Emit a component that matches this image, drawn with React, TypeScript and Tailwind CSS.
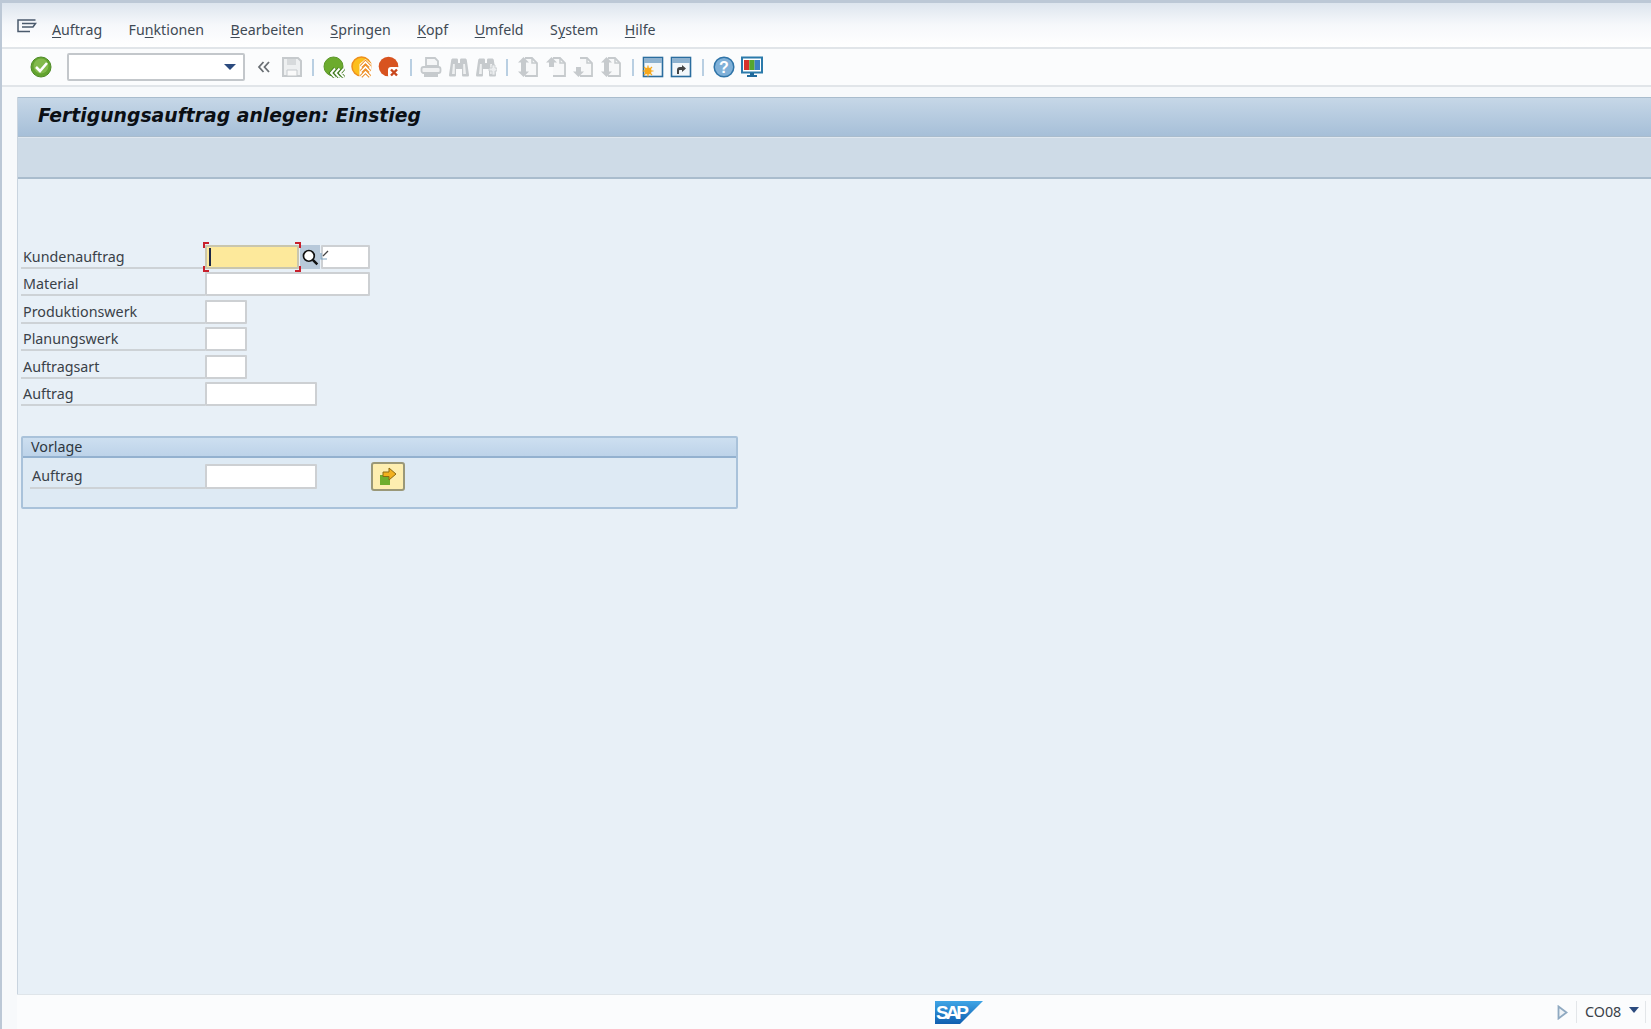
const sans = "font-['Noto_Sans','Open_Sans',sans-serif]";

function Mn({ pre = "", u, post }: { pre?: string; u: string; post: string }) {
  return (
    <span className="text-[14.2px] leading-[20px] text-[#3f4a55]">
      {pre}
      <span className="underline underline-offset-2">{u}</span>
      {post}
    </span>
  );
}

function Sep({ ml }: { ml: string }) {
  return <div className={`h-[17px] w-[2px] bg-[#b9cfe2] ${ml}`} />;
}

const G = "#c6cacd";

function Ic({ children, className = "" }: { children: React.ReactNode; className?: string }) {
  return (
    <svg viewBox="0 0 22 22" className={`h-[22px] w-[22px] shrink-0 ${className}`}>
      {children}
    </svg>
  );
}

function Page({ kind, ml = "ml-[5.700px]" }: { kind: "both" | "up" | "down"; ml?: string }) {
  return (
    <Ic className={ml}>
      <path d="M8 2h7l5 5v13H8" fill="#f7f8f9" stroke={G} strokeWidth="1.800" />
      <path d="M15 2v5h5" fill="none" stroke={G} strokeWidth="1.500" />
      {kind !== "down" && <path d="M6.500 1l5.500 5.500H9V11H4V6.500H1z" fill={G} />}
      {kind !== "up" && <path d="M6.500 21l5.500-5.500H9V11H4v4.500H1z" fill={G} />}
    </Ic>
  );
}

function WindowIc({ children, ml }: { children: React.ReactNode; ml: string }) {
  return (
    <Ic className={ml}>
      <rect x="1.500" y="1.500" width="19" height="19" fill="#f3f7fa" stroke="#2b6d9f" strokeWidth="1.600" />
      <rect x="2" y="2" width="18" height="5" fill="#8fb2cf" />
      {children}
    </Ic>
  );
}

function Binoc({ plus, ml }: { plus?: boolean; ml: string }) {
  return (
    <Ic className={ml}>
      <path d="M5 2.500h3.500c1 0 1.500.5 1.500 1.500v3h2V4c0-1 .5-1.500 1.500-1.500H17c1 0 1.500.5 1.800 1.500L21 19c0 1-.5 1.500-1.500 1.500h-4c-1 0-1.500-.5-1.500-1.500v-6H8v6c0 1-.5 1.500-1.500 1.500h-4C1.500 20.500 1 20 1 19L3.200 4C3.500 3 4 2.500 5 2.500z" fill={G} />
      <path d="M5 8h1.800v10H4zM15.200 8H17l1 10h-2.800z" fill="#eff1f2" />
      {plus && <path d="M14 12h3V9h3v3h2v3h-2v4h-3v-4h-3z" fill="#eceef0" stroke={G} strokeWidth="0.800" />}
    </Ic>
  );
}

const BACK = "M12 12.500L8 17l4 4.500M16.500 12.500L12.500 17l4 4.500M21 12.500L17 17l4 4.500";
const EXIT = "M10 10.500l4.500-4.500 4.500 4.500M10 15.500l4.500-4.500 4.500 4.500M10 20.500l4.500-4.500 4.500 4.500";

function Toolbar() {
  return (
    <div className="flex h-[38px] items-center border-b-2 border-[#e1e5e9] bg-[#fbfcfd]">
      <Ic className="ml-[28px]">
        <circle cx="11" cy="11" r="10" fill="#63a32f" stroke="#4e8b27" />
        <circle cx="11" cy="10" r="7.500" fill="#82b94c" />
        <path d="M6 11l4 4 7-8" fill="none" stroke="#fff" strokeWidth="2.600" />
      </Ic>
      <div className="ml-[15px] flex h-[28px] w-[178px] items-center justify-end rounded-[2px] border-2 border-[#c3c7cb] bg-white pr-[7px]">
        <div className="h-0 w-0 border-x-[6px] border-t-[6px] border-x-transparent border-t-[#2b4a7e]" />
      </div>
      <svg viewBox="0 0 14 12" className="ml-[12px] h-[12px] w-[14px] shrink-0">
        <path d="M6.500 1L2 6l4.500 5M12 1L7.500 6l4.500 5" fill="none" stroke="#6a6f74" strokeWidth="1.800" />
      </svg>
      <Ic className="ml-[10px]">
        <path d="M2 2h15l3 3v15H2z" fill="#eef0f1" stroke={G} strokeWidth="2" />
        <path d="M6 3h9v6H6z" fill="#d7dadc" />
        <path d="M6 14h10v6H6z" fill="#fafafa" stroke={G} />
      </Ic>
      <Sep ml="ml-[9px]" />
      <Ic className="ml-[9px]">
        <circle cx="10.500" cy="10.500" r="9.500" fill="#6cab2e" stroke="#5b9628" />
        <path d={BACK} fill="none" stroke="#3f7a1e" strokeWidth="3.600" />
        <path d={BACK} fill="none" stroke="#fff" strokeWidth="1.900" />
      </Ic>
      <Ic className="ml-[5.500px]">
        <circle cx="10.500" cy="10.500" r="9.500" fill="#fcbf1e" stroke="#ee8f1c" strokeWidth="1.500" />
        <path d="M14.500 3l6 5v13H8.500V8z" fill="#fff" />
        <path d={EXIT} fill="none" stroke="#ec8a1d" strokeWidth="3.400" />
        <path d={EXIT} fill="none" stroke="#fff" strokeWidth="1.600" />
      </Ic>
      <Ic className="ml-[5.500px]">
        <circle cx="10.500" cy="10.500" r="9.800" fill="#d8531f" />
        <rect x="10" y="11" width="12" height="11" rx="3" fill="#fff" />
        <path d="M13 13.500l6 6M19 13.500l-6 6" stroke="#c9471d" strokeWidth="2.400" />
      </Ic>
      <Sep ml="ml-[10px]" />
      <Ic className="ml-[8px]">
        <path d="M6 2h9l3 3v5H6z" fill="#f5f6f7" stroke={G} strokeWidth="1.800" />
        <rect x="1.500" y="11" width="19" height="6" rx="2" fill="#f0f1f2" stroke={G} strokeWidth="1.800" />
        <rect x="4" y="18" width="14" height="3" fill={G} />
      </Ic>
      <Binoc ml="ml-[6px]" />
      <Binoc plus ml="ml-[5px]" />
      <Sep ml="ml-[9px]" />
      <Page kind="both" ml="ml-[9px]" />
      <Page kind="up" />
      <Page kind="down" />
      <Page kind="both" />
      <Sep ml="ml-[10px]" />
      <WindowIc ml="ml-[8px]">
        <circle cx="6" cy="15" r="3.500" fill="#f7a81b" />
        <path d="M6 9.500v11M.500 15h11M2 11l8 8M10 11l-8 8" stroke="#f7a81b" strokeWidth="1.200" />
      </WindowIc>
      <WindowIc ml="ml-[6px]">
        <path d="M7 18v-4c0-2 1-3 3-3h2V9l4 3.500-4 3.500v-2h-2c-1 0-1 .5-1 1v3z" fill="#444" />
      </WindowIc>
      <Sep ml="ml-[10px]" />
      <svg viewBox="0 0 22 22" className="ml-[9px] h-[22px] w-[22px] shrink-0">
        <circle cx="11" cy="11" r="9.800" fill="#7fb0d8" stroke="#2f74a8" strokeWidth="1.500" />
        <text x="11" y="17" textAnchor="middle" fill="#fff" fontSize="16" fontWeight="700" fontFamily="Liberation Sans, sans-serif">?</text>
      </svg>
      <Ic className="ml-[5.500px]">
        <rect x="1" y="1.500" width="20" height="15" fill="#fff" stroke="#2b7aab" strokeWidth="2" />
        <rect x="3" y="4" width="5.300" height="10" fill="#d9322a" />
        <rect x="8.300" y="4" width="5.300" height="10" fill="#55a630" />
        <rect x="13.600" y="4" width="5.400" height="10" fill="#3c80c4" />
        <path d="M9 17h4v2h3v2H6v-2h3z" fill="#1f6a9c" />
      </Ic>
    </div>
  );
}

function Label({ children, w = "w-[184px]" }: { children: React.ReactNode; w?: string }) {
  return (
    <div className={`${w} h-full shrink-0 border-b-2 border-[#cdd2d6] pl-[2px] pt-[2px] text-[14.300px] leading-[20px] text-[#3a4148]`}>
      {children}
    </div>
  );
}

function Field({ w }: { w: string }) {
  return <div className={`${w} h-[24px] shrink-0 rounded-[1px] border-2 border-[#cdd0d3] bg-white`} />;
}

function Row({ label, w }: { label: string; w: string }) {
  return (
    <div className="flex h-[24px] items-stretch">
      <Label>{label}</Label>
      <Field w={w} />
    </div>
  );
}

function Corner({ pos }: { pos: string }) {
  return <div className={`absolute h-[6px] w-[6px] border-[#c8202c] ${pos}`} />;
}

function FocusRow() {
  return (
    <div className="flex h-[24px] items-stretch">
      <Label>Kundenauftrag</Label>
      <div className="relative flex shrink-0">
        <div className="flex h-[24px] w-[94px] items-center rounded-[1px] border-2 border-[#c9c6ae] bg-[#fde99b] pl-[2px]">
          <div className="h-[18px] w-[2px] bg-[#1c2747]" />
        </div>
        <Corner pos="-left-[2px] -top-[3px] border-l-2 border-t-2" />
        <Corner pos="-bottom-[3px] -left-[2px] border-b-2 border-l-2" />
        <Corner pos="right-[-2px] -top-[3px] border-r-2 border-t-2" />
        <Corner pos="bottom-[-3px] right-[-2px] border-b-2 border-r-2" />
      </div>
      <div className="ml-[1px] flex h-[24px] w-[20px] shrink-0 items-center justify-center bg-[#b8c9da]">
        <svg viewBox="0 0 16 16" className="h-[18px] w-[18px]">
          <circle cx="7" cy="7" r="4.800" fill="#fff" stroke="#111" strokeWidth="1.500" />
          <path d="M10.500 10.500l4 4" stroke="#111" strokeWidth="2.200" />
        </svg>
      </div>
      <div className="relative flex">
        <Field w="w-[49px] ml-[1px]" />
        <svg viewBox="0 0 9 10" className="absolute left-[0px] top-[5px] h-[10px] w-[9px]">
          <path d="M1 3v6h6" fill="none" stroke="#7fa5c4" strokeWidth="1.200" />
          <path d="M3 6l5-5" stroke="#444" strokeWidth="1.300" />
        </svg>
      </div>
    </div>
  );
}

export default function App() {
  return (
    <div className={`${sans} flex h-[1029px] w-full flex-col overflow-hidden bg-[#fbfcfd]`}>
      <div className="h-[3px] shrink-0 bg-[#bcc8d6]" />
      <div className="flex min-h-0 flex-1">
        <div className="w-[2px] shrink-0 bg-[#bcc8d6]" />
        <div className="flex min-w-0 flex-1 flex-col">
          <div className="flex h-[46px] shrink-0 items-start border-b-2 border-[#e1e5e9] bg-gradient-to-b from-[#dde5ee] via-[#f6f8fb] to-white">
            <svg viewBox="0 0 20 15" className="ml-[15px] mt-[15px] h-[15px] w-[20px] shrink-0">
              <path d="M18.500 2H1v11.500h12M5 5.500h13.500L16 9H5" fill="none" stroke="#4a5a6c" strokeWidth="1.500" />
            </svg>
            <div className="ml-[15px] mt-[17px] flex gap-[26.500px]">
              <Mn u="A" post="uftrag" />
              <Mn pre="Fu" u="n" post="ktionen" />
              <Mn u="B" post="earbeiten" />
              <Mn u="S" post="pringen" />
              <Mn u="K" post="opf" />
              <Mn u="U" post="mfeld" />
              <Mn pre="S" u="y" post="stem" />
              <Mn u="H" post="ilfe" />
            </div>
          </div>
          <Toolbar />
          <div className="flex min-h-0 flex-1">
            <div className="w-[15px] shrink-0 bg-[#f7f9fb]" />
            <div className="flex min-w-0 flex-1 flex-col">
              <div className="h-[10px] shrink-0 bg-[#f7f9fb]" />
              <div className="flex min-h-0 flex-1 flex-col border-l border-[#c9d4df] bg-[#e8f0f7]">
                <div className="flex h-[40px] shrink-0 items-center border-y border-[#a9bccd] bg-gradient-to-b from-[#c6d7e7] to-[#a6bfd8] pb-[1px] pl-[20px] font-['DejaVu_Sans',sans-serif] text-[18.800px] font-bold italic text-[#0b0f14]">
                  Fertigungsauftrag anlegen: Einstieg
                </div>
                <div className="h-[42px] shrink-0 border-b-2 border-t border-[#a9bccd] border-t-[#dfe7ef] bg-[#cedbe7]" />
                <div className="flex min-h-0 flex-1 flex-col pl-[3px] pt-[66px]">
                  <div className="flex flex-col gap-[3.400px]">
                    <FocusRow />
                    <Row label="Material" w="w-[165px]" />
                    <Row label="Produktionswerk" w="w-[42px]" />
                    <Row label="Planungswerk" w="w-[42px]" />
                    <Row label="Auftragsart" w="w-[42px]" />
                    <Row label="Auftrag" w="w-[112px]" />
                  </div>
                  <div className="mt-[30px] h-[73px] w-[717px] rounded-[2px] border-2 border-[#a9c2da] bg-[#deeaf4]">
                    <div className="h-[20px] border-b-2 border-[#93b1cf] bg-gradient-to-b from-[#cddff0] to-[#bdd3e9] pl-[8px] text-[14.300px] leading-[18px] text-[#2d3640]">
                      Vorlage
                    </div>
                    <div className="ml-[7px] mt-[6px] flex h-[25px] items-stretch">
                      <Label w="w-[175px]">Auftrag</Label>
                      <Field w="w-[112px] h-[25px]" />
                      <button className="ml-[54px] flex h-[29px] w-[34px] -translate-y-[2px] items-center justify-center rounded-[3px] border-2 border-[#9a9878] bg-[#fdeeb0]">
                        <svg viewBox="0 0 18 18" className="h-[18px] w-[18px]">
                          <rect x="1" y="8" width="10" height="10" fill="#6fae2d" />
                          <path d="M4 5h6V1l7 6-7 6V9.500H4z" fill="#f2b01e" stroke="#8c6a12" strokeWidth="1" />
                        </svg>
                      </button>
                    </div>
                  </div>
                </div>
              </div>
              <div className="flex h-[35px] shrink-0 items-center border-t border-[#dfe5ea] bg-[#fbfcfd]">
                <svg viewBox="0 0 48 23" className="ml-[918px] h-[23px] w-[48px] shrink-0">
                  <defs>
                    <linearGradient id="sapg" x1="0" y1="0" x2="0" y2="1">
                      <stop offset="0" stopColor="#3fa5e6" />
                      <stop offset="1" stopColor="#0f5fb0" />
                    </linearGradient>
                  </defs>
                  <polygon points="0,0 48,0 25,23 0,23" fill="url(#sapg)" />
                  <text x="1" y="18" fill="#fff" fontSize="19" fontWeight="700" fontFamily="Liberation Sans, sans-serif" textLength="33">SAP</text>
                </svg>
                <svg viewBox="0 0 11 15" className="ml-[574px] h-[15px] w-[11px] shrink-0">
                  <path d="M1.500 1.500l8 6-8 6z" fill="#eef2f6" stroke="#8fa9c1" strokeWidth="1.800" />
                </svg>
                <div className="ml-[8px] h-[22px] w-[1px] bg-[#e3e6e9]" />
                <span className="ml-[8px] text-[14.300px] text-[#3a4148]">CO08</span>
                <div className="mb-[4px] ml-[8px] h-0 w-0 border-x-[5.500px] border-t-[6px] border-x-transparent border-t-[#2b4a7e]" />
                <div className="ml-[6px] h-[22px] w-[1px] bg-[#e3e6e9]" />
              </div>
            </div>
          </div>
        </div>
      </div>
    </div>
  );
}
